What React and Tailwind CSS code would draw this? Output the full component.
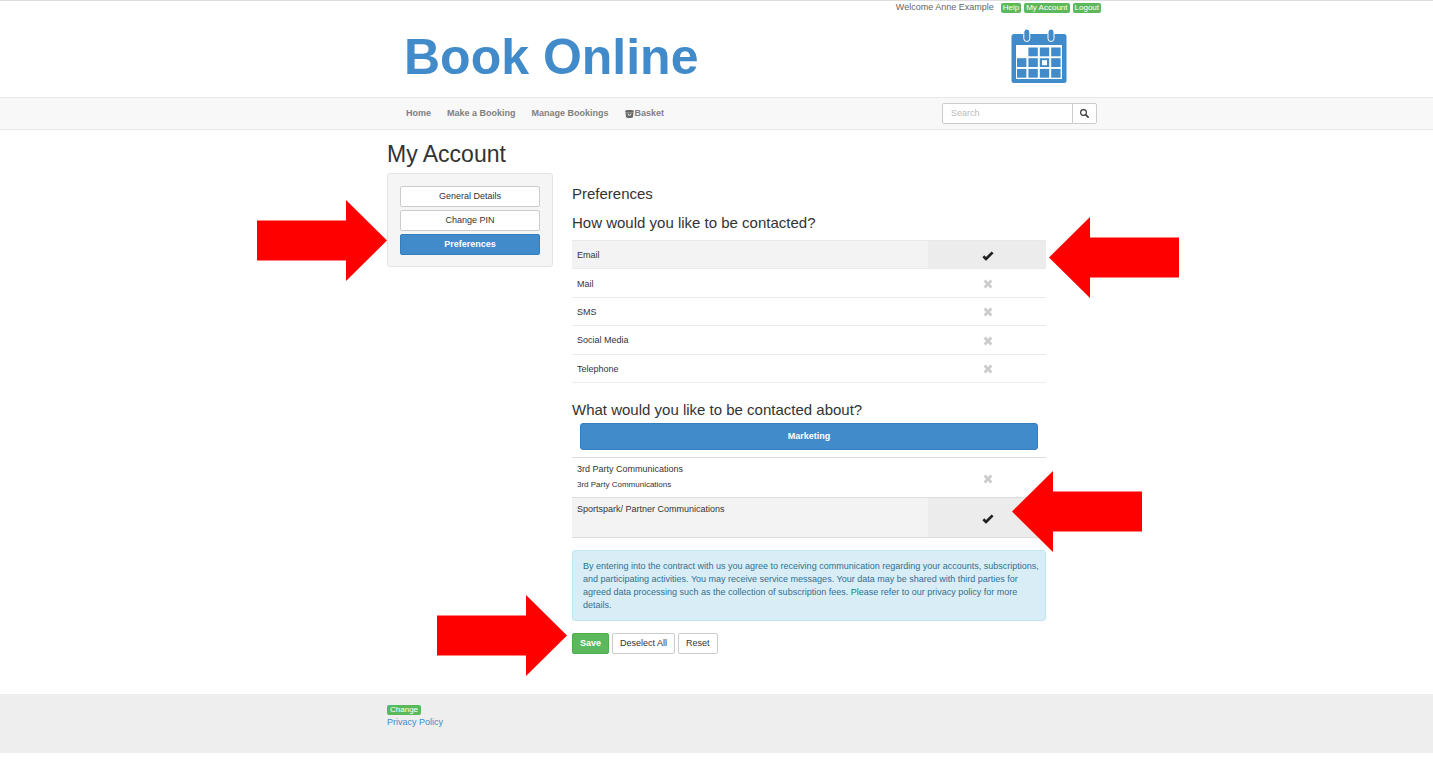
import { useState } from "react";

const NAV = ["Home", "Make a Booking", "Manage Bookings"];

const CHANNELS = ["Email", "Mail", "SMS", "Social Media", "Telephone"];

const TOPICS = [
  { name: "3rd Party Communications", note: "3rd Party Communications" },
  { name: "Sportspark/ Partner Communications", note: "" },
];

function CalendarLogo() {
  const cells = [
    [1, 0], [2, 0], [3, 0],
    [0, 1], [1, 1], [2, 1], [3, 1],
    [0, 2], [1, 2], [2, 2], [3, 2],
  ];
  return (
    <svg width="56" height="54" viewBox="0 0 56 54" aria-hidden="true">
      <rect x="0.5" y="5" width="55" height="49" rx="2.5" fill="#428bca" />
      <rect x="5" y="16" width="46" height="34" fill="#fff" />
      {cells.map(([c, r]) => (
        <rect
          key={`${c}-${r}`}
          x={6 + c * 11.4}
          y={18.5 + r * 10.7}
          width="9.4"
          height="8.8"
          fill="#428bca"
        />
      ))}
      <rect x="31" y="31.2" width="5" height="5" fill="#fff" />
      <rect x="12.8" y="0" width="6" height="12.5" rx="3" fill="#428bca" stroke="#fff" />
      <rect x="37" y="0" width="6" height="12.5" rx="3" fill="#428bca" stroke="#fff" />
    </svg>
  );
}

function BasketIcon() {
  return (
    <svg width="9" height="8" viewBox="0 0 16 15" aria-hidden="true">
      <path
        fill="#666"
        fillRule="evenodd"
        d="M0 1.500C0 .6 4 0 8 0s8 .6 8 1.500V4H0zM.4 4.800h15.200l-1.200 8.700c-.2.900-3 1.500-6.400 1.500s-6.200-.6-6.400-1.500zM4 6.500l2 4h4l2-4h-1.800l-1 2.200H6.800l-1-2.200z"
      />
    </svg>
  );
}

function SearchIcon() {
  return (
    <svg width="9" height="9" viewBox="0 0 18 18" aria-hidden="true">
      <circle cx="7" cy="7" r="5.8" fill="none" stroke="#333" strokeWidth="2.200" />
      <path d="M11.500 11.500l4.800 4.800" stroke="#333" strokeWidth="3" strokeLinecap="round" />
    </svg>
  );
}

function TickIcon({ className }) {
  return (
    <svg className={className} width="12" height="10" viewBox="0 0 12 10" aria-hidden="true">
      <path fill="#222" d="M9.600.4l2 1.900-7.200 7.300h-.8L.4 6.200l1.900-2L4 5.900z" />
    </svg>
  );
}

function CrossIcon({ className }) {
  return (
    <svg className={className} width="10" height="10" viewBox="0 0 10 10" aria-hidden="true">
      <path
        fill="#ccc"
        d="M2.600.6L5 3 7.400.6l2 2L7 5l2.400 2.400-2 2L5 7 2.600 9.400l-2-2L3 5 .6 2.600z"
      />
    </svg>
  );
}

function Arrow({ flip, className }) {
  return (
    <svg
      className={`absolute z-10 pointer-events-none ${className}`}
      width="130"
      height="81"
      viewBox="0 0 130 81"
      aria-hidden="true"
    >
      <path
        fill="#f00"
        d={flip ? "M0 40.5L41 0v20.500h89v40H41V81z" : "M130 40.500L89 0v20.500H0v40h89V81z"}
      />
    </svg>
  );
}

function Toggle({ label, checked, onChange }) {
  return (
    <label className="relative flex justify-center cursor-pointer">
      <input
        type="checkbox"
        aria-label={label}
        checked={checked}
        onChange={onChange}
        className="peer sr-only"
      />
      <TickIcon className="hidden peer-checked:block" />
      <CrossIcon className="peer-checked:hidden" />
    </label>
  );
}

export default function App() {
  const [search, setSearch] = useState("");
  const [selected, setSelected] = useState(["Email", "Sportspark/ Partner Communications"]);

  const toggle = (name) =>
    setSelected((prev) =>
      prev.includes(name) ? prev.filter((n) => n !== name) : [...prev, name]
    );

  return (
    <div className="bg-white border-t border-[#ddd] font-['Liberation_Sans',Arial,sans-serif] text-[9px] leading-[13px] text-[#333]">
      {/* Top bar and logo */}
      <header className="max-w-[769px] mx-auto">
        <div className="flex justify-end items-center gap-[3px] h-[13px] text-[#666]">
          <span className="mr-1">Welcome Anne Example</span>
          {["Help", "My Account", "Logout"].map((l) => (
            <a
              key={l}
              href="#"
              className="rounded-[2px] bg-[#5cb85c] px-[2px] text-[8px] leading-[10px] text-white"
            >
              {l}
            </a>
          ))}
        </div>
        <div className="flex justify-between items-center h-[83px] pl-[70px] pr-[34px]">
          <p className="pt-[2px] pl-[2px] text-[50px] leading-[60px] font-bold text-[#428bca]">
            Book Online
          </p>
          <CalendarLogo />
        </div>
      </header>

      <nav className="bg-[#f8f8f8] border-y border-[#e7e7e7]">
        <div className="flex items-center justify-between max-w-[769px] h-[31px] mx-auto pl-[74px] pr-1">
          <div className="flex items-center gap-4 font-bold text-[#808080]">
            {NAV.map((n) => (
              <a key={n} href="#">{n}</a>
            ))}
            <a href="#" className="flex items-center gap-px">
              <BasketIcon />
              Basket
            </a>
          </div>
          <form className="flex h-[21px]" onSubmit={(e) => e.preventDefault()}>
            <input
              type="text"
              aria-label="Search"
              placeholder="Search"
              value={search}
              onChange={(e) => setSearch(e.target.value)}
              className="w-[131px] border border-[#ccc] rounded-l-[2px] bg-white px-2 placeholder:text-[#bbb] focus:outline-none"
            />
            <button
              type="submit"
              aria-label="Search"
              className="flex items-center justify-center w-[25px] -ml-px border border-[#ccc] rounded-r-[2px] bg-white"
            >
              <SearchIcon />
            </button>
          </form>
        </div>
      </nav>

      <main className="max-w-[769px] mx-auto px-[55px] pt-3 pb-10">
        <h1 className="text-[23px] leading-[24px] mb-[7px]">My Account</h1>
        <div className="flex items-start gap-[19px]">
          {/* Side menu */}
          <aside className="relative flex flex-col gap-[3px] w-[166px] border border-[#e3e3e3] rounded-[3px] bg-[#f5f5f5] px-3 pt-3 pb-[11px]">
            <button className="h-[21px] border border-[#ccc] rounded-[2px] bg-white">
              General Details
            </button>
            <button className="h-[21px] border border-[#ccc] rounded-[2px] bg-white">
              Change PIN
            </button>
            <button className="h-[21px] border border-[#357ebd] rounded-[2px] bg-[#428bca] text-white font-bold">
              Preferences
            </button>
            <Arrow className="right-full mr-px top-[26px]" />
          </aside>

          <section className="flex-1 pt-3">
            <h2 className="text-[15px] leading-[17px] mb-3">Preferences</h2>
            <div className="relative">
              <h3 className="text-[15px] leading-[17px] mb-[9px]">
                How would you like to be contacted?
              </h3>
              <table className="w-full h-[143px] border-b border-[#eee]">
                <tbody>
                  {CHANNELS.map((c) => {
                    const on = selected.includes(c);
                    return (
                      <tr key={c} className={`border-t border-[#e9e9e9] ${on ? "bg-[#f3f3f3]" : ""}`}>
                        <td className="px-[5px] pt-[2px]">{c}</td>
                        <td className={`w-[118px] pt-[2px] pl-[2px] ${on ? "bg-[#ececec]" : ""}`}>
                          <Toggle label={c} checked={on} onChange={() => toggle(c)} />
                        </td>
                      </tr>
                    );
                  })}
                </tbody>
              </table>
              <Arrow flip className="left-full ml-[3px] top-[3px]" />
            </div>

            <div className="relative mt-[18px]">
              <h3 className="text-[15px] leading-[17px] mb-[5px]">
                What would you like to be contacted about?
              </h3>
              <div className="px-2">
                <button className="block w-full h-[27px] border border-[#357ebd] rounded-[3px] bg-[#428bca] text-white font-bold">
                  Marketing
                </button>
              </div>
              <table className="w-full mt-[7px] border-b border-[#ddd]">
                <tbody>
                  {TOPICS.map((t) => {
                    const on = selected.includes(t.name);
                    return (
                      <tr key={t.name} className={`h-10 border-t border-[#ddd] ${on ? "bg-[#f3f3f3]" : ""}`}>
                        <td className="px-[5px] pt-[5px] align-top">
                          {t.name}
                          {t.note && <p className="mt-[3px] text-[8px] leading-[12px]">{t.note}</p>}
                        </td>
                        <td className={`w-[118px] pt-[2px] pl-[2px] ${on ? "bg-[#ececec]" : ""}`}>
                          <Toggle label={t.name} checked={on} onChange={() => toggle(t.name)} />
                        </td>
                      </tr>
                    );
                  })}
                </tbody>
              </table>
              <Arrow flip className="left-full -ml-[34px] bottom-[-14px]" />
            </div>

            <p className="mt-3 border border-[#bce8f1] rounded-[3px] bg-[#d9edf7] pl-[10px] pr-[6px] pt-[9px] pb-2 text-[#31708f]">
              By entering into the contract with us you agree to receiving communication regarding
              your accounts, subscriptions, and participating activities. You may receive service
              messages. Your data may be shared with third parties for agreed data processing such
              as the collection of subscription fees. Please refer to our privacy policy for more
              details.
            </p>

            <div className="relative flex gap-[3px] mt-3">
              <button className="h-[21px] border border-[#4cae4c] rounded-[2px] bg-[#5cb85c] px-[7px] text-white font-bold">
                Save
              </button>
              <button
                onClick={() => setSelected([])}
                className="h-[21px] border border-[#ccc] rounded-[2px] bg-white px-[7px]"
              >
                Deselect All
              </button>
              <button className="h-[21px] border border-[#ccc] rounded-[2px] bg-white px-[7px]">
                Reset
              </button>
              <Arrow className="right-full mr-[5px] -top-[38px]" />
            </div>
          </section>
        </div>
      </main>

      <footer className="bg-[#eee]">
        <div className="flex flex-col items-start max-w-[769px] h-[59px] mx-auto px-[55px] pt-[11px]">
          <a
            href="#"
            className="rounded-[2px] bg-[#5cb85c] px-[3px] text-[8px] leading-[10px] text-white"
          >
            Change
          </a>
          <a href="#" className="mt-px text-[#428bca]">Privacy Policy</a>
        </div>
      </footer>
    </div>
  );
}
